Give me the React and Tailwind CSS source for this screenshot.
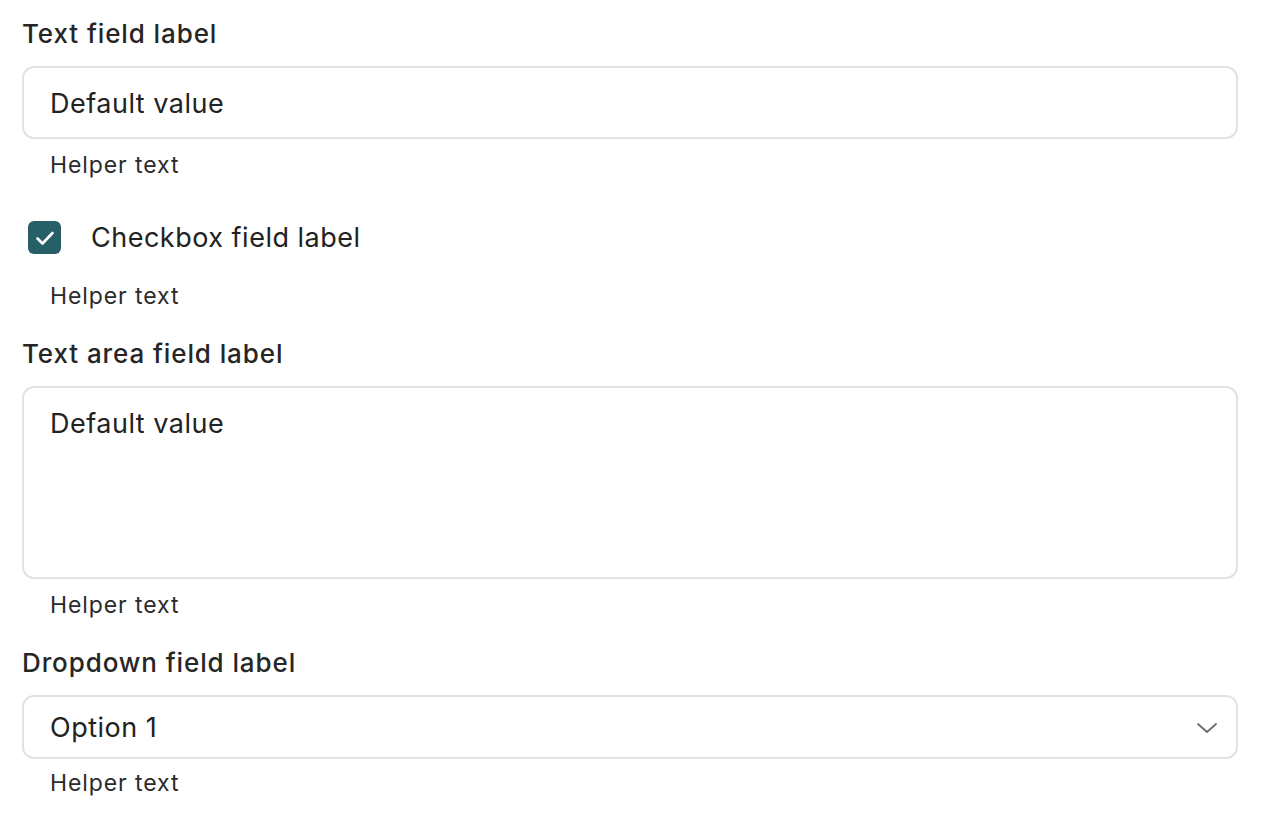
import React, { useState } from "react";

const font = { fontFamily: "Inter, 'Liberation Sans', sans-serif" };

const Helper = ({ children }) => (
  <div className="pl-[28px] text-[23px] leading-[28px] tracking-[0.9px] text-[#2b2b2b]">
    {children}
  </div>
);

const Label = ({ children }) => (
  <div className="text-[26px] leading-[30px] font-medium tracking-[0.9px] text-[#262626]">
    {children}
  </div>
);

export default function App() {
  const [checked, setChecked] = useState(true);

  return (
    <div className="min-h-screen bg-white pl-[22px] pr-[24px] pt-[19px]" style={font}>
      {/* text field */}
      <Label>Text field label</Label>
      <div className="mt-[17px] flex h-[73px] items-center rounded-[12px] border-2 border-[#e2e2e2] px-[26px] pt-[3px]">
        <span className="text-[27px] tracking-[0.5px] text-[#222]">Default value</span>
      </div>
      <div className="mt-[12px]">
        <Helper>Helper text</Helper>
      </div>

      {/* checkbox */}
      <div className="mt-[42px] flex items-center">
        <button
          className="ml-[6px] flex h-[33px] w-[33px] items-center justify-center rounded-[6px] bg-[#275f66]"
          onClick={() => setChecked(!checked)}
        >
          {checked && (
            <svg width="22" height="22" viewBox="0 0 22 22" fill="none">
              <path
                d="M3.5 11.5l5 5L18.5 6"
                stroke="white"
                strokeWidth="2.6"
                strokeLinecap="round"
                strokeLinejoin="round"
              />
            </svg>
          )}
        </button>
        <span className="ml-[30px] text-[27px] leading-[32px] tracking-[0.5px] text-[#222]">
          Checkbox field label
        </span>
      </div>
      <div className="mt-[28px]">
        <Helper>Helper text</Helper>
      </div>

      {/* text area */}
      <div className="mt-[29px]">
        <Label>Text area field label</Label>
      </div>
      <div className="mt-[17px] h-[193px] rounded-[12px] border-2 border-[#e2e2e2] px-[26px] pt-[16px]">
        <span className="text-[27px] tracking-[0.5px] text-[#222]">Default value</span>
      </div>
      <div className="mt-[12px]">
        <Helper>Helper text</Helper>
      </div>

      {/* dropdown */}
      <div className="mt-[29px]">
        <Label>Dropdown field label</Label>
      </div>
      <div className="mt-[17px] flex h-[64px] items-center justify-between rounded-[12px] border-2 border-[#e2e2e2] pl-[26px] pr-[18px] pt-[2px]">
        <span className="text-[27px] tracking-[0.5px] text-[#222]">Option 1</span>
        <svg width="22" height="14" viewBox="0 0 22 14" fill="none">
          <path d="M2 3l9 8 9-8" stroke="#6b6b6b" strokeWidth="1.8" strokeLinecap="round" strokeLinejoin="round" />
        </svg>
      </div>
      <div className="mt-[10px]">
        <Helper>Helper text</Helper>
      </div>
    </div>
  );
}
